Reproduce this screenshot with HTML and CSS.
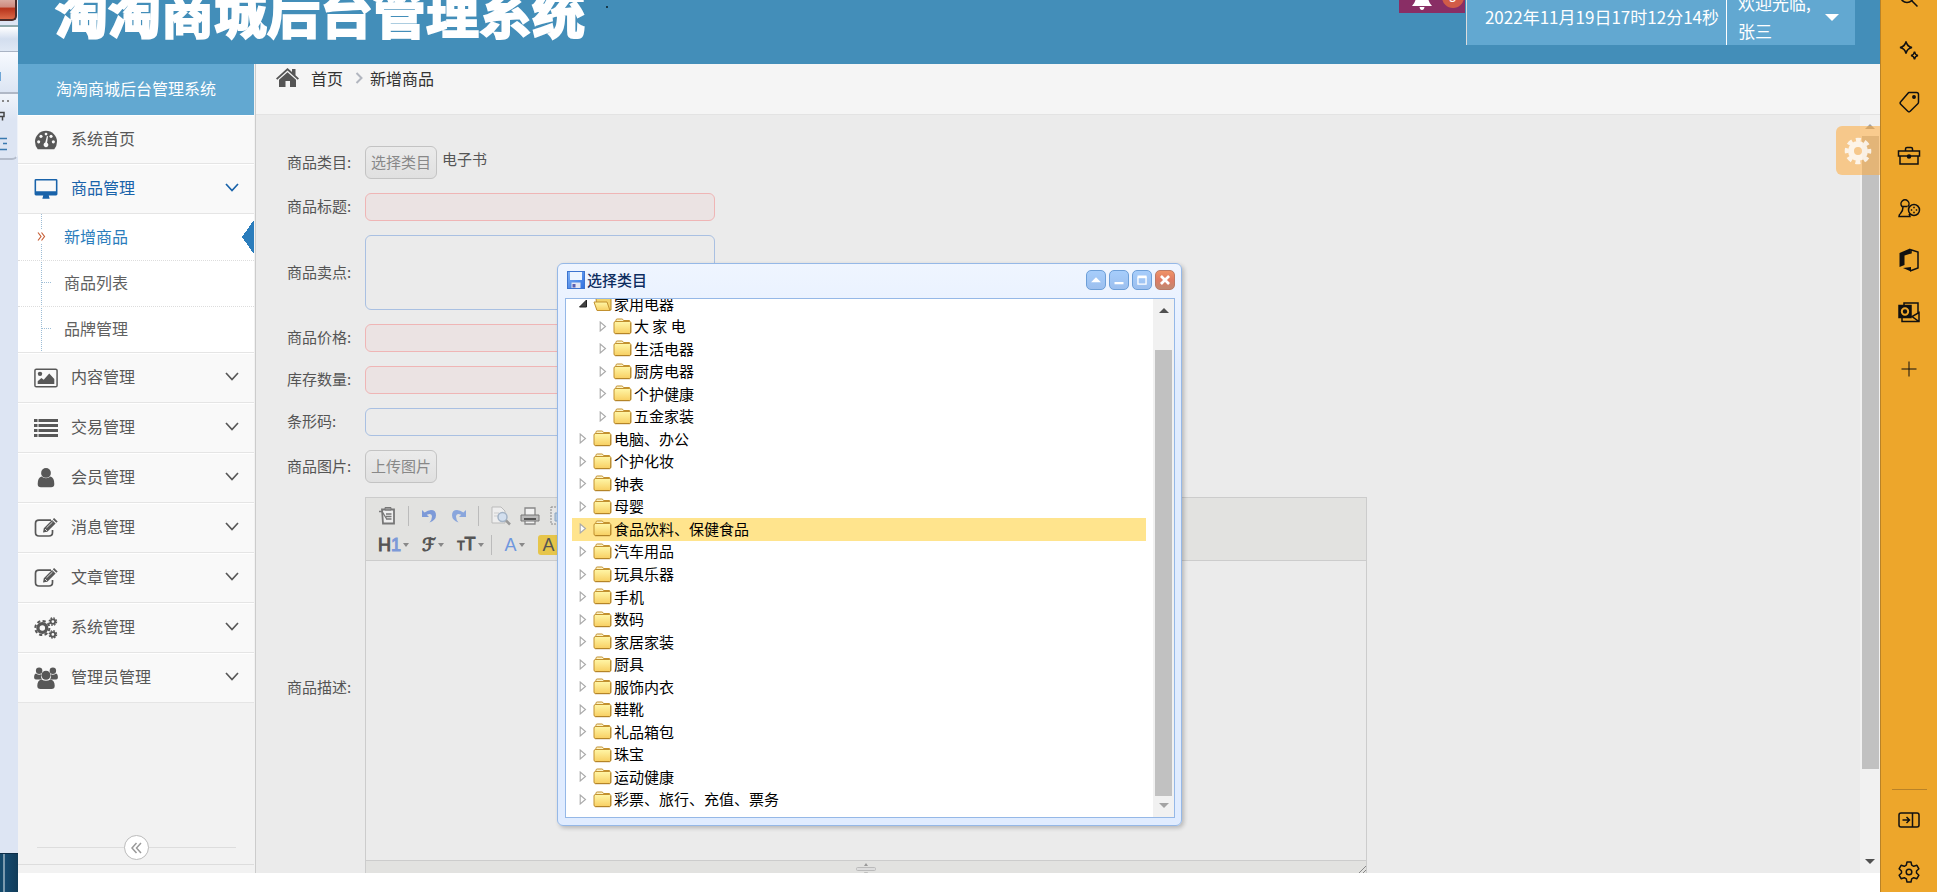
FILE: index.html
```html
<!DOCTYPE html>
<html lang="zh-CN">
<head>
<meta charset="utf-8">
<title>淘淘商城后台管理系统</title>
<link rel="stylesheet" href="styles.css">
</head>
<body>
<svg class="defs" aria-hidden="true">
  <defs>
    <linearGradient id="folder-fill" x1="0" y1="0" x2="0" y2="1"><stop offset="0" stop-color="#fff7a8"/><stop offset="1" stop-color="#f8cf62"/></linearGradient>
    <linearGradient id="disk-fill" x1="0" y1="0" x2="1" y2="1"><stop offset="0" stop-color="#7fb2f5"/><stop offset="1" stop-color="#2f6fe0"/></linearGradient>
  </defs>
  <symbol id="chev" viewBox="0 0 14 9"><path d="M1 1l6 6.5L13 1" fill="none" stroke="currentColor" stroke-width="1.7"/></symbol>
  <symbol id="arrow" viewBox="0 0 7 11"><path d="M.7 1v9L6 5.5z" fill="#fff" stroke="#a9a9a9" stroke-width="1.1"/></symbol>
  <symbol id="arrow-open" viewBox="0 0 8 8"><path d="M7.5 .5v7h-7z" fill="#444" stroke="#222"/></symbol>
  <symbol id="folder" viewBox="0 0 19 17"><path d="M3 2.2Q3 1 4.200 1h4.600Q10 1 10.500 2.500H16.500V5H2z" fill="#fdf3c4" stroke="#c2912f"/><rect x="1" y="3.500" width="17" height="12" rx="1.500" fill="url(#folder-fill)" stroke="#c2912f"/><path d="M17.500 5v10M2 15.800h15" stroke="#a3741f" opacity=".6"/></symbol>
  <symbol id="folder-open" viewBox="0 0 19 17"><path d="M3 3Q3 1.500 4.500 1.500h4L10 3h6.500Q18 3 18 4.500V15H4z" fill="#f3d36b" stroke="#b98a2c"/><path d="M1 7h13l3 8.500H4z" fill="url(#folder-fill)" stroke="#c2912f"/></symbol>
  <symbol id="edit" viewBox="0 0 24 20"><path d="M17 2.200H5Q1.500 2.200 1.500 5.500v9Q1.500 18 5 18h10q3.500 0 3.500-3.500V12" fill="none" stroke="currentColor" stroke-width="1.700"/><path d="M9 14.500l.8-4.200L18 2l3.600 3.500-8.300 8.300zM18.800 1.300L20.100 0l3.600 3.500-1.300 1.300z" fill="currentColor"/><path d="M11 11l2 2M12.500 9.800L18.500 4" stroke="#f9f9f9" stroke-width=".8"/></symbol>
</svg>

<div class="screen">
  <div class="desktop" aria-hidden="true">
    <div class="win-close"></div>
    <div class="win-frame"></div>
    <div class="win-bar"></div>
    <div class="win-tools">
      <svg width="15" height="66" viewBox="0 0 15 66"><path d="M2 7h2M7 7h2" stroke="#888" stroke-width="2"/><path d="M0 18.500h4v4H0M2.500 22.500v4" fill="none" stroke="#444" stroke-width="1.500"/><path d="M0 44.500h7M3 49.500h4M0 55.500h7" stroke="#3a7ab0" stroke-width="1.500"/></svg>
    </div>
    <div class="taskbar"></div>
  </div>

  <div class="app">
    <header class="header">
      <h1 class="logo">淘淘商城后台管理系统</h1>
      <span class="speck"></span>
      <div class="tools">
        <button class="bell" type="button" aria-label="通知">
          <svg width="20" height="22" viewBox="0 0 20 22"><path d="M0 18Q4 14 4 8a6 6 0 0 1 12 0q0 6 4 10zM7.500 19h5q-.5 3-2.500 3t-2.500-3z" fill="#fff"/></svg>
          <span class="badge">5</span>
        </button>
        <div class="clock">2022年11月19日17时12分14秒</div>
        <button class="user" type="button"><span>欢迎光临,<br>张三</span><i class="caret-down"></i></button>
      </div>
    </header>

    <div class="body">
      <aside class="sidebar">
        <div class="side-title">淘淘商城后台管理系统</div>
        <nav class="menu">
          <a class="item first" href="#"><svg class="ico" viewBox="0 0 24 24"><path d="M3 22Q0 18.500 0 14a12 12 0 0 1 24 0q0 4.500-3 8z" fill="currentColor"/><g fill="#f9f9f9"><circle cx="4" cy="14" r="1.700"/><circle cx="6.500" cy="8" r="1.700"/><circle cx="12" cy="5.500" r="1.500"/><circle cx="17.500" cy="8" r="1.700"/><circle cx="20" cy="14" r="1.700"/><path d="M13 7.500l1.200.3-1 7.200a2.600 2.600 0 1 1-2-.2z"/></g></svg><span>系统首页</span></a>
          <a class="item open" href="#"><svg class="ico" viewBox="0 0 26 24"><path d="M2 1h22q1.500 0 1.500 1.500v15q0 1.500-1.500 1.500H16l1 3.500H9l1-3.500H2Q.5 19 .5 17.500v-15Q.5 1 2 1zm.2 1.700v11.800h21.600V2.700z" fill="currentColor"/></svg><span>商品管理</span><svg class="chev"><use href="#chev"/></svg></a>
          <ul class="submenu">
            <li class="active"><a href="#"><svg class="guillemet" viewBox="0 0 9 9"><path d="M1 .5l3 4-3 4M4.500 .5l3 4-3 4" fill="none" stroke="#c86139" stroke-width="1.200"/></svg>新增商品</a></li>
            <li><a href="#">商品列表</a></li>
            <li><a href="#">品牌管理</a></li>
          </ul>
          <a class="item" href="#"><svg class="ico" viewBox="0 0 26 22"><rect x="1" y="1.500" width="24" height="19" rx="1.500" fill="none" stroke="currentColor" stroke-width="1.600"/><circle cx="6.500" cy="6.500" r="2.400" fill="currentColor"/><path d="M4 17.500v-3l4-3.500 2.500 2L16.500 6l5.500 6v5.500z" fill="currentColor"/></svg><span>内容管理</span><svg class="chev"><use href="#chev"/></svg></a>
          <a class="item" href="#"><svg class="ico" viewBox="0 0 24 20"><path d="M0 2.500h3.500m1 0H24M0 7.500h3.500m1 0H24M0 12.500h3.500m1 0H24M0 17.500h3.500m1 0H24" stroke="currentColor" stroke-width="3"/></svg><span>交易管理</span><svg class="chev"><use href="#chev"/></svg></a>
          <a class="item" href="#"><svg class="ico" viewBox="0 0 26 22"><circle cx="13" cy="5.500" r="5.300" fill="currentColor"/><path d="M8 9.500q5 3.500 10 0 4 1.500 4 8Q22 21 18.500 21h-11Q4 21 4 17.500q0-6.500 4-8z" fill="currentColor"/></svg><span>会员管理</span><svg class="chev"><use href="#chev"/></svg></a>
          <a class="item" href="#"><svg class="ico"><use href="#edit"/></svg><span>消息管理</span><svg class="chev"><use href="#chev"/></svg></a>
          <a class="item" href="#"><svg class="ico"><use href="#edit"/></svg><span>文章管理</span><svg class="chev"><use href="#chev"/></svg></a>
          <a class="item" href="#"><svg class="ico" viewBox="0 0 26 24"><g fill="none" stroke="currentColor"><circle cx="9" cy="12" r="4.800" stroke-width="3.600"/><circle cx="9" cy="12" r="7.700" stroke-width="2.200" stroke-dasharray="3.500 2.550"/><circle cx="20.500" cy="5" r="2.500" stroke-width="2"/><circle cx="20.500" cy="5" r="4" stroke-width="1.500" stroke-dasharray="1.800 1.340"/><circle cx="20.500" cy="19" r="2.500" stroke-width="2"/><circle cx="20.500" cy="19" r="4" stroke-width="1.500" stroke-dasharray="1.800 1.340"/></g></svg><span>系统管理</span><svg class="chev"><use href="#chev"/></svg></a>
          <a class="item" href="#"><svg class="ico" viewBox="0 0 26 24"><g fill="currentColor"><circle cx="5.500" cy="4" r="3.500"/><circle cx="20.500" cy="4" r="3.500"/><path d="M2 7q3 2 5.500 1Q7 11 8.500 13.500H2q-2 0-2-2Q0 7.500 2 7zM24 7q-3 2-5.500 1 .5 3-1 5.500H24q2 0 2-2Q26 7.500 24 7z"/><circle cx="13" cy="9" r="5"/><path d="M8 13.500q5 3 10 0 4.500 1 4.500 7 0 3.500-3.500 3.500H7q-3.500 0-3.500-3.500 0-6 4.500-7z"/></g></svg><span>管理员管理</span><svg class="chev"><use href="#chev"/></svg></a>
        </nav>
        <div class="collapse">
          <button type="button" aria-label="收起菜单"><svg width="11" height="12" viewBox="0 0 11 12"><path d="M5.500 1L1 6l4.500 5M10 1L5.500 6l4.500 5" fill="none" stroke="#999" stroke-width="1.500"/></svg></button>
        </div>
      </aside>

      <main class="main">
        <div class="crumbs">
          <svg width="23" height="20" viewBox="0 0 23 20"><path d="M0 10.500L11.500 0 16 4V1h3.500v6.200L23 10.500l-1.300 1.300L11.500 2.600 1.300 11.800z" fill="#555"/><path d="M3 11.800l8.500-7.600 8.500 7.600V19h-6v-6H9.500v6H3z" fill="#555"/></svg>
          <a href="#">首页</a>
          <svg width="8" height="12" viewBox="0 0 8 12"><path d="M1.500 1l5 5-5 5" fill="none" stroke="#b2b6bf" stroke-width="2"/></svg>
          <span>新增商品</span>
        </div>
        <div class="pane">
          <form class="form">
            <label for="cat">商品类目:</label>
            <div class="field"><button class="btn" id="cat" type="button">选择类目</button><span class="picked">电子书</span></div>
            <label for="title">商品标题:</label>
            <input class="required" id="title" type="text">
            <label for="sell">商品卖点:</label>
            <textarea id="sell"></textarea>
            <label for="price">商品价格:</label>
            <input class="required" id="price" type="text">
            <label for="num">库存数量:</label>
            <input class="required" id="num" type="text">
            <label for="barcode">条形码:</label>
            <input id="barcode" type="text">
            <label for="pic">商品图片:</label>
            <div class="field"><button class="btn" id="pic" type="button">上传图片</button></div>
            <label for="desc">商品描述:</label>
            <div class="editor">
              <div class="toolbar">
                <div class="tools-row">
                  <svg width="18" height="20" viewBox="0 0 18 20"><path d="M4 3.500h12v14H5z" fill="#eee" stroke="#777" stroke-width="1.800"/><path d="M7 1.500h6V4H7z" fill="#999" stroke="#777"/><path d="M8 8h5.500M8 10.500h5.500M8 13h5.500M1 5.500h3l5 8" fill="none" stroke="#777" stroke-width="1.300"/></svg>
                  <i class="sep"></i>
                  <svg width="16" height="16" viewBox="0 0 16 16"><path d="M1 2v7h7L5.800 6.700Q11 4.500 11 8.500q0 3-2.500 6Q15 12 15 7.200 15 2 10 2 7 2 3.600 4.600z" fill="#7d9ad8"/></svg>
                  <svg class="redo" width="16" height="16" viewBox="0 0 16 16"><path d="M15 2v7H8l2.200-2.300Q5 4.500 5 8.500q0 3 2.500 6Q1 12 1 7.200 1 2 6 2q3 0 6.400 2.600z" fill="#8aa6dc"/></svg>
                  <i class="sep"></i>
                  <svg width="20" height="20" viewBox="0 0 20 20"><path d="M1 1h9l4 4v12H1z" fill="#eee" stroke="#bbb"/><path d="M3 7h5M3 10h4" stroke="#ccc"/><circle cx="11.500" cy="11" r="4.500" fill="#d3dfee" stroke="#a3b3c6" stroke-width="1.500"/><path d="M15 14.500l4 4" stroke="#999" stroke-width="2.500"/></svg>
                  <svg class="print" width="20" height="20" viewBox="0 0 20 20"><path d="M5 9V2h10v7M5 14v4h10v-4" fill="#f2f2f2" stroke="#888" stroke-width="1.300"/><path d="M1 9h18v6H1z" fill="#bbb" stroke="#777"/><path d="M4 13h12" stroke="#555" stroke-width="2"/></svg>
                  <svg width="20" height="20" viewBox="0 0 20 20"><path d="M1 1h18v17H1z" fill="#e6e6e6" stroke="#888" stroke-dasharray="2 1"/><path d="M5 7h14v8H5z" fill="#bacde0" stroke="#8ba7c4"/></svg>
                  <svg class="tail" width="14" height="18" viewBox="0 0 14 18"><rect x="1" y="1" width="12" height="16" rx="1" fill="#e3dede" stroke="#bbb"/><path d="M4 5h6M4 9h6M4 13h6" stroke="#d9bcbc"/></svg>
                </div>
                <div class="tools-row text-tools">
                  <b class="heading">H<em>1</em></b><i class="drop"></i>
                  <b class="script">ℱ</b><i class="drop"></i>
                  <b class="sizes"><small>T</small>T</b><i class="drop"></i>
                  <i class="sep"></i>
                  <b class="color">A</b><i class="drop"></i>
                  <b class="mark">A</b>
                  <svg class="tail" width="14" height="18" viewBox="0 0 14 18"><circle cx="6" cy="9" r="6" fill="#dde3e9" stroke="#b4c1ce"/></svg>
                </div>
              </div>
              <textarea id="desc" class="edit-area"></textarea>
              <div class="status">
                <svg width="20" height="14" viewBox="0 0 20 14"><path d="M10 1l2 3H8zM10 13l2-2.500H8z" fill="#999"/><rect x=".5" y="5.500" width="19" height="3" rx="1" fill="#ddd" stroke="#bbb"/></svg>
                <svg class="grip" width="8" height="8" viewBox="0 0 8 8"><path d="M1 8l7-7M5 8l3-3" stroke="#888"/></svg>
              </div>
            </div>
          </form>
          <div class="page-scroll" aria-hidden="true"><i class="up"></i><i class="thumb"></i><i class="down"></i></div>
          <button class="settings" type="button" aria-label="设置"><svg width="28" height="28" viewBox="0 0 28 28"><circle cx="14" cy="14" r="7" fill="none" stroke="#fff" stroke-width="6"/><circle cx="14" cy="14" r="11.300" fill="none" stroke="#fff" stroke-width="4" stroke-dasharray="5 3.875" stroke-dashoffset="2.500"/></svg></button>
        </div>
      </main>
    </div>
  </div>

  <nav class="edge" aria-label="侧边栏">
    <button type="button" aria-label="搜索"><svg viewBox="0 0 24 24"><circle cx="10" cy="10" r="6.500"/><path d="M14.500 14.500l6 6"/></svg></button>
    <button type="button" aria-label="发现"><svg viewBox="0 0 24 24"><path d="M9 3.500q1 5 6 6-5 1-6 6-1-5-6-6 5-1 6-6zM17.500 13.500q.5 3.500 3.500 4-3 .5-3.500 4-.5-3.500-3.500-4 3-.5 3.500-4z"/></svg></button>
    <button type="button" aria-label="购物"><svg viewBox="0 0 24 24"><path d="M12 2.500h7.500q2 0 2 2V12q0 1-.7 1.700l-7.600 7.600q-1.200 1.200-2.400 0l-7.100-7.100q-1.200-1.200 0-2.400l7.100-8.200q.6-1.100 1.200-1.100z"/><circle cx="17" cy="7" r="1.200" fill="#111"/></svg></button>
    <button class="lower" type="button" aria-label="工具"><svg viewBox="0 0 24 24"><path d="M8.500 7V5q0-1.500 1.500-1.500h4q1.500 0 1.500 1.500v2M1.500 7h21v5h-21zM3 12v8h18v-8"/><circle cx="12" cy="12.500" r="1.500" fill="#111"/></svg></button>
    <button type="button" aria-label="游戏"><svg viewBox="0 0 24 24"><path d="M5 10.500a4 4 0 1 1 6 0M4.500 10.500h6M6 11q0 4-2.500 6.500-1.500 1-1.500 3h11q0-1-1-2.500"/><circle cx="17" cy="14" r="5.500"/><path d="M17 10.800v1.400M17 15.800v1.400M13.800 14h1.400M18.800 14h1.400"/></svg></button>
    <button type="button" aria-label="Office"><svg viewBox="0 0 24 24"><path d="M13 .5L2.500 5v14l5-2V7.500L14 5.500zM6 20l8 3.500V19z" fill="#111" stroke="none"/><path d="M13 1.500l8 2.500v16l-8 3M14 1.500v4"/></svg></button>
    <button type="button" aria-label="Outlook"><svg viewBox="0 0 24 24"><path d="M7 6V3h14v10M5 18v3.500h17v-9l-7 4 7 5"/><rect x="2" y="5.500" width="12" height="12" fill="#111"/><circle cx="8" cy="11.500" r="3.200" stroke="#eda62b" stroke-width="2"/></svg></button>
    <button class="plus" type="button" aria-label="添加"><svg viewBox="0 0 24 24"><path d="M12 4.500v15M4.500 12h15" stroke-width="1"/></svg></button>
    <hr>
    <button type="button" aria-label="隐藏侧边栏"><svg viewBox="0 0 24 24"><rect x="2" y="5" width="20" height="14" rx="2"/><path d="M15.500 5v14M5.500 12h6.500M9.500 9l3 3-3 3"/></svg></button>
    <button type="button" aria-label="侧边栏设置"><svg viewBox="0 0 24 24"><circle cx="12" cy="12" r="2.800"/><path d="M10 2h4l.7 3.200 2 1.100 3.200-1 2 3.500-2.400 2.200v2l2.400 2.200-2 3.500-3.200-1-2 1.100L14 22h-4l-.7-3.200-2-1.100-3.200 1-2-3.500L4.500 13v-2L2.100 8.800l2-3.500 3.200 1 2-1.100z" stroke-linejoin="round"/></svg></button>
  </nav>

  <section class="dialog" role="dialog" aria-label="选择类目">
    <div class="dialog-head">
      <svg width="18" height="18" viewBox="0 0 18 18"><rect x=".5" y=".5" width="17" height="17" fill="url(#disk-fill)" stroke="#3d74cf"/><path d="M3 1h12v8H3z" fill="#edf5ff"/><path d="M4.500 11.500h9V17h-9z" fill="#e4e6f3"/><path d="M5.500 13h3v3.500h-3z" fill="#5a5fb0"/></svg>
      <h2>选择类目</h2>
      <button type="button" aria-label="折叠"><svg viewBox="0 0 20 20"><path d="M10 7l5.500 5.500h-11z" fill="#fff"/></svg></button>
      <button type="button" aria-label="最小化"><svg viewBox="0 0 20 20"><path d="M5 13.500h10" stroke="#fff" stroke-width="2.500"/></svg></button>
      <button type="button" aria-label="最大化"><svg viewBox="0 0 20 20"><path d="M5.500 7v7.500h9V6" fill="none" stroke="#fff" stroke-width="1.500"/><path d="M5 6.500h10" stroke="#fff" stroke-width="3"/></svg></button>
      <button class="close" type="button" aria-label="关闭"><svg viewBox="0 0 20 20"><path d="M5.500 5.500l9 9M14.500 5.500l-9 9" stroke="#fff" stroke-width="3"/></svg></button>
    </div>
    <div class="dialog-body">
      <ul class="tree">
        <li><svg class="tw"><use href="#arrow-open"/></svg><svg class="fd"><use href="#folder-open"/></svg>家用电器</li>
        <li class="child"><svg class="tw"><use href="#arrow"/></svg><svg class="fd"><use href="#folder"/></svg>大 家 电</li>
        <li class="child"><svg class="tw"><use href="#arrow"/></svg><svg class="fd"><use href="#folder"/></svg>生活电器</li>
        <li class="child"><svg class="tw"><use href="#arrow"/></svg><svg class="fd"><use href="#folder"/></svg>厨房电器</li>
        <li class="child"><svg class="tw"><use href="#arrow"/></svg><svg class="fd"><use href="#folder"/></svg>个护健康</li>
        <li class="child"><svg class="tw"><use href="#arrow"/></svg><svg class="fd"><use href="#folder"/></svg>五金家装</li>
        <li><svg class="tw"><use href="#arrow"/></svg><svg class="fd"><use href="#folder"/></svg>电脑、办公</li>
        <li><svg class="tw"><use href="#arrow"/></svg><svg class="fd"><use href="#folder"/></svg>个护化妆</li>
        <li><svg class="tw"><use href="#arrow"/></svg><svg class="fd"><use href="#folder"/></svg>钟表</li>
        <li><svg class="tw"><use href="#arrow"/></svg><svg class="fd"><use href="#folder"/></svg>母婴</li>
        <li class="selected"><svg class="tw"><use href="#arrow"/></svg><svg class="fd"><use href="#folder"/></svg>食品饮料、保健食品</li>
        <li><svg class="tw"><use href="#arrow"/></svg><svg class="fd"><use href="#folder"/></svg>汽车用品</li>
        <li><svg class="tw"><use href="#arrow"/></svg><svg class="fd"><use href="#folder"/></svg>玩具乐器</li>
        <li><svg class="tw"><use href="#arrow"/></svg><svg class="fd"><use href="#folder"/></svg>手机</li>
        <li><svg class="tw"><use href="#arrow"/></svg><svg class="fd"><use href="#folder"/></svg>数码</li>
        <li><svg class="tw"><use href="#arrow"/></svg><svg class="fd"><use href="#folder"/></svg>家居家装</li>
        <li><svg class="tw"><use href="#arrow"/></svg><svg class="fd"><use href="#folder"/></svg>厨具</li>
        <li><svg class="tw"><use href="#arrow"/></svg><svg class="fd"><use href="#folder"/></svg>服饰内衣</li>
        <li><svg class="tw"><use href="#arrow"/></svg><svg class="fd"><use href="#folder"/></svg>鞋靴</li>
        <li><svg class="tw"><use href="#arrow"/></svg><svg class="fd"><use href="#folder"/></svg>礼品箱包</li>
        <li><svg class="tw"><use href="#arrow"/></svg><svg class="fd"><use href="#folder"/></svg>珠宝</li>
        <li><svg class="tw"><use href="#arrow"/></svg><svg class="fd"><use href="#folder"/></svg>运动健康</li>
        <li><svg class="tw"><use href="#arrow"/></svg><svg class="fd"><use href="#folder"/></svg>彩票、旅行、充值、票务</li>
      </ul>
      <div class="tree-scroll" aria-hidden="true"><i class="up"></i><i class="thumb"></i><i class="down"></i></div>
    </div>
  </section>
</div>
</body>
</html>
```

FILE: styles.css
```css
* { box-sizing: border-box; }
body { margin: 0; background: #fff; color: #555; font: 15px/20px "Noto Sans CJK SC", sans-serif; }
button, input, textarea { font: inherit; color: inherit; margin: 0; padding: 0; border: 0; background: none; outline: 0; }
a { color: inherit; text-decoration: none; }
ul { margin: 0; padding: 0; list-style: none; }
h1, h2 { margin: 0; }
svg { display: block; flex: none; }
.defs { position: absolute; width: 0; height: 0; }

.screen { position: relative; display: flex; height: 100vh; overflow: hidden; }

/* desktop strip behind the browser window */
.desktop { width: 18px; flex: none; display: flex; flex-direction: column; background: #dde5f3; }
.win-close { height: 21px; margin-right: 1px; border: solid #4b2b28; border-width: 0 2px 2px 0; border-radius: 0 0 5px 0; background: linear-gradient(#d9aaa0, #cf8c80 35%, #b8341c 45%, #dc6a48); }
.win-frame { height: 27px; margin-top: 4px; border-top: 2px solid #8fa9ad; border-bottom: 1px solid #a9b3c4; background: linear-gradient(#fff, #d3deef 50%, #dfe8f5); }
.win-bar { height: 42px; background: linear-gradient(#6fa6d6, #6fa6d6) 0 20px / 1px 9px no-repeat, linear-gradient(#f7faff, #dce5f3); border-bottom: 2px solid #b0b8c6; }
.win-tools { height: 66px; border-bottom: 2px solid #b4bccb; border-right: 1px solid #eef2f9; border-radius: 0 0 6px 0; background: linear-gradient(#f1f5fb, #dde5f3 40%); }
.taskbar { height: 39px; margin-top: auto; border-top: 1px solid #0c2c46; background: linear-gradient(90deg, #14496b 3px, #7a99ad 3px, #7a99ad 5px, #154a70 5px, #123c59); }

.app { flex: 1; min-width: 0; display: flex; flex-direction: column; padding-bottom: 19px; }
.header { height: 64px; flex: none; display: flex; align-items: flex-start; overflow: hidden; background: #438eb9; color: #fff; }
.logo { margin: -19px 0 0 37px; font-size: 53px; line-height: 60px; font-weight: 700; -webkit-text-stroke: 2px #fff; stroke-linejoin: round; white-space: nowrap; }
.speck { width: 2px; height: 2px; margin: 6px 0 0 21px; background: #16384a; }
.tools { display: flex; align-items: flex-end; margin: -11px 25px 0 auto; height: 56px; font-size: 17px; line-height: 28px; }
.bell { align-self: flex-start; display: flex; gap: 10px; align-items: center; width: 67px; height: 24px; padding-left: 13px; background: #892e65; border-right: 1px solid #438eb9; }
.bell svg { margin-bottom: 4px; }
.badge { width: 22px; height: 22px; margin-bottom: 8px; border-radius: 50%; background: #d15b47; font-size: 13px; line-height: 22px; }
.clock { height: 56px; padding: 0 7px 0 18px; line-height: 56px; background: #62a8d1; border-left: 1px solid #ddd; white-space: nowrap; }
.user { width: 129px; height: 56px; display: flex; justify-content: space-between; align-items: flex-start; padding: 0 16px 0 11px; text-align: left; background: #62a8d1; border-left: 1px solid #fff; }
.caret-down { align-self: center; border: solid transparent; border-width: 7px 7px 0; border-top-color: #fff; }

.body { flex: 1; min-height: 0; display: flex; }
.sidebar { width: 238px; flex: none; display: flex; flex-direction: column; padding-right: 1px; overflow: hidden; background: #f2f2f2; border-right: 1px solid #ccc; font-size: 16px; }
.side-title { height: 51px; flex: none; background: #62a8d1; color: #fff; text-align: center; line-height: 48px; }
.item { display: flex; align-items: center; height: 50px; padding: 0 15px 0 16px; gap: 13px; background: #f9f9f9; border-top: 1px solid #fff; border-bottom: 1px solid #e5e5e5; color: #585858; }
.item.first { height: 49px; }
.item span { flex: 1; padding-bottom: 4px; }
.ico { width: 24px; height: 22px; }
.chev { width: 14px; height: 9px; margin-bottom: 4px; }
.open { color: #1963aa; }
.submenu { background: repeating-linear-gradient(#9dbdd6 0 1px, #fff 1px 2px) 23px 0 / 1px 100% no-repeat #fff; border-bottom: 1px solid #e5e5e5; }
.submenu li { height: 46px; border-top: 1px dotted #ddd; line-height: 20px; color: #616161; }
.submenu li a { display: flex; align-items: center; height: 100%; padding-bottom: 3px; }
.submenu li a::before { content: ""; width: 9px; margin: 0 13px 0 24px; border-top: 1px dotted #9dbdd6; }
.submenu li.active { height: 46px; border-top: 0; color: #2b7dbc; background: conic-gradient(from 35deg at 0 50%, #2b7dbc 0 110deg, transparent 0) 100% 6px / 12px 34px no-repeat; }
.submenu li.active a::before { content: none; }
.guillemet { width: 9px; height: 15px; margin: 2px 18px 0 19px; background: #fff; }
.collapse { height: 33px; margin: auto 0 8px; padding-top: 3px; display: flex; justify-content: center; align-items: flex-start; border-bottom: 1px solid #ddd; background: linear-gradient(#ddd, #ddd) 50% 15px / 199px 1px no-repeat; }
.collapse button { width: 25px; height: 25px; display: grid; place-items: center; border: 1px solid #bbb; border-radius: 50%; background: #fff; }

.main { flex: 1; min-width: 0; display: flex; flex-direction: column; background: #ebebeb; }
.crumbs { height: 51px; flex: none; display: flex; align-items: center; gap: 12px; padding: 0 20px 22px; background: #f5f5f5; border-bottom: 1px solid #e3e3e3; color: #333; font-size: 16px; }
.crumbs span { margin-left: -5px; }
.pane { position: relative; flex: 1; min-height: 0; display: flex; overflow: hidden; }
.form { flex: 1; display: grid; grid-template-columns: 64px minmax(0, 1002px); grid-auto-rows: max-content; align-items: center; align-content: start; column-gap: 14px; row-gap: 14px; padding: 31px 31px 0; }
.form label { white-space: nowrap; padding-bottom: 2px; }
.field { display: flex; gap: 5px; }
.picked { padding-top: 3px; }
.btn { width: 72px; height: 33px; padding-bottom: 1px; border: 1px solid #c3c3c3; border-radius: 6px; background: linear-gradient(#ebebeb, #e0e0e0); color: #888; }
.form > input, .form > textarea { width: 350px; height: 28px; border: 1px solid #a9c0e2; border-radius: 6px; background: #ebebeb; }
.form > textarea { display: block; height: 75px; resize: none; }
.form > .required { border-color: #efb5b5; background: #ebe3e3; }

.editor { height: 382px; display: flex; flex-direction: column; border: 1px solid #ccc; }
.toolbar { height: 63px; flex: none; padding: 1px 12px; background: #e2e2e0; border-bottom: 1px solid #ccc; }
.tools-row { height: 30px; display: flex; align-items: center; gap: 14px; padding-top: 3px; }
.tools-row .sep { width: 1px; height: 20px; margin: 0 -2px; background: #bbb; }
.redo { margin-right: -1px; }
.print { margin: 0 -4px 0 -5px; }
.tail { margin: 0 177px 0 auto; opacity: .6; }
.text-tools { gap: 2px; font-size: 18px; line-height: 24px; color: #555; padding-top: 1px; }
.text-tools b { font-family: "Liberation Sans", sans-serif; font-weight: 400; -webkit-text-stroke: 1px currentColor; }
.heading em { font-style: normal; color: #7d9ad8; }
.text-tools .script { font-family: "DejaVu Sans", sans-serif; }
.drop { margin-right: 11px; border: solid transparent; border-width: 4px 3px 0; border-top-color: #888; }
.sizes small { font-size: 12px; }
.text-tools .sep { margin: 0 11px 0 -6px; }
.text-tools .color { color: #6f97de; -webkit-text-stroke: 0; }
.text-tools .mark { padding: 0 5px; line-height: 20px; border-radius: 3px; background: #e6c54a; -webkit-text-stroke: 0; }
.edit-area { flex: 1; width: 100%; resize: none; }
.status { position: relative; height: 18px; flex: none; display: flex; justify-content: center; padding-top: 1px; background: #e2e2e0; border-top: 1px solid #ccc; }
.grip { position: absolute; right: 0; top: 4px; }

.page-scroll, .tree-scroll { flex: none; display: flex; flex-direction: column; align-items: center; background: #f1f1f1; }
.page-scroll { width: 20px; padding: 9px 0; }
.up { border: solid transparent; border-width: 0 5px 5px; border-bottom-color: #505050; }
.down { border: solid transparent; border-width: 5px 5px 0; border-top-color: #505050; }
.thumb { background: #c1c1c1; width: 17px; }
.page-scroll .up { border-bottom-color: #a3a3a3; }
.page-scroll .thumb { flex: 1; margin: 7px 0 90px; }
.settings { position: absolute; right: 0; top: 11px; width: 44px; height: 49px; display: grid; place-items: center; border-radius: 6px 0 0 6px; background: rgba(255, 172, 60, .55); }
.settings svg { opacity: .8; }

/* browser side bar */
.edge { width: 57px; flex: none; display: flex; flex-direction: column; align-items: center; background: #eda62b; border-left: 1px solid #b98227; margin-top: -28px; }
.edge button { width: 52px; height: 52px; flex: none; display: grid; place-items: center; }
.edge svg { width: 24px; height: 24px; fill: none; stroke: #111; stroke-width: 1.500; }
.edge .lower { margin-top: 2px; }
.edge .plus { margin-top: 5px; }
.edge hr { width: 35px; margin: auto 0 4px; border: 0; border-top: 1px solid #b98227; }
.edge button:last-child { margin-bottom: -6px; }

/* category picker window */
.dialog { position: absolute; left: 557px; top: 263px; width: 625px; border: 1px solid #95b8e7; border-radius: 6px; padding: 0 6px 7px 7px; background: linear-gradient(#eff5ff, #e0ecff 20%); box-shadow: 2px 2px 4px rgba(0, 0, 0, .22); color: #000; }
.dialog-head { display: flex; align-items: center; gap: 3px; height: 34px; padding: 0 0 6px 2px; }
.dialog-head h2 { flex: 1; margin-left: -1px; font-size: 15px; line-height: 20px; font-weight: 500; color: #0e2d5f; }
.dialog-head button { width: 20px; height: 20px; margin-top: 4px; border: 1px solid #6d9fd8; border-radius: 5px; background: linear-gradient(#a6cdfb, #9cbfee); }
.dialog-head > svg, .dialog-head h2 { margin-top: 3px; }
.dialog-head .close { border-color: #bc7a66; background: linear-gradient(#ef9468, #df7b64 50%, #c08a72); }
.dialog-body { display: flex; height: 520px; overflow: hidden; border: 1px solid #95b8e7; background: #fff; }
.tree { flex: 1; height: 518px; margin: -6px 7px 0 6px; display: grid; grid-auto-rows: 1fr; }
.tree li { display: flex; align-items: center; padding: 0 0 1px 7px; white-space: nowrap; }
.tree .child { padding-left: 27px; }
.tree .selected { background: #ffe48d; }
.tree .tw { width: 8px; height: 11px; margin-right: 6px; }
.tree .fd { width: 19px; height: 17px; margin-right: 2px; }
.tree-scroll { width: 21px; padding: 9px 0; }
.tree-scroll .thumb { flex: 1; margin: 37px 0 7px; }
.tree-scroll .down { border-top-color: #a3a3a3; }
```
